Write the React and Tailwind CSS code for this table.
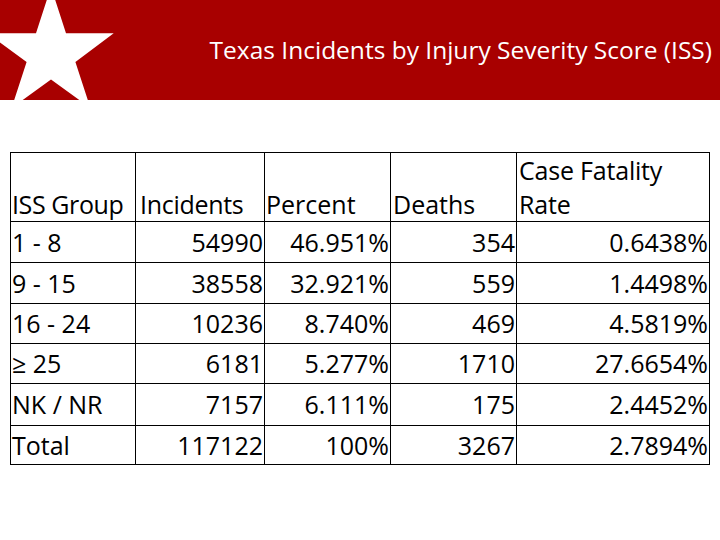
const rows = [
  ["1 - 8", "54990", "46.951%", "354", "0.6438%"],
  ["9 - 15", "38558", "32.921%", "559", "1.4498%"],
  ["16 - 24", "10236", "8.740%", "469", "4.5819%"],
  ["\u2265 25", "6181", "5.277%", "1710", "27.6654%"],
  ["NK / NR", "7157", "6.111%", "175", "2.4452%"],
  ["Total", "117122", "100%", "3267", "2.7894%"],
];

const heights = ["h-[41px]", "h-[41px]", "h-[40px]", "h-[40px]", "h-[42px]", "h-[39px]"];

function Star() {
  return (
    <svg
      className="absolute left-0 top-0"
      width="120"
      height="100"
      viewBox="0 0 120 100"
    >
      <polygon
        fill="#fff"
        points="51,-13 66,33.3 113.7,33.3 75.4,61.9 90.4,108 51,79.6 11.6,108 26.6,61.9 -12.7,33.3 36,33.3"
      />
    </svg>
  );
}

export default function App() {
  return (
    <div className="w-[720px] h-[540px] bg-white overflow-hidden font-['Open_Sans',sans-serif]">
      {/* Title bar */}
      <div className="relative h-[100px] bg-[#a80000] flex items-center justify-end pr-[8px]">
        <Star />
        <h1 className="text-white text-[24.5px] leading-none">
          Texas Incidents by Injury Severity Score (ISS)
        </h1>
      </div>

      {/* Table */}
      <table className="mt-[52px] ml-[10px] border-collapse text-black text-[25px] table-fixed">
        <colgroup>
          <col className="w-[125px]" />
          <col className="w-[129px]" />
          <col className="w-[126px]" />
          <col className="w-[126px]" />
          <col className="w-[193px]" />
        </colgroup>
        <thead>
          <tr className="h-[68px]">
            <th className="border border-black font-normal text-left align-bottom leading-[34px] pl-[1px] whitespace-nowrap tracking-[-0.4px]">ISS Group</th>
            <th className="border border-black font-normal text-left align-bottom leading-[34px] pl-[4px] tracking-[-0.3px]">Incidents</th>
            <th className="border border-black font-normal text-left align-bottom leading-[34px] pl-[1px]">Percent</th>
            <th className="border border-black font-normal text-left align-bottom leading-[34px] pl-[2px]">Deaths</th>
            <th className="border border-black font-normal text-left align-bottom leading-[34px] pl-[2px] tracking-[-0.2px]">
              Case Fatality
              <br />
              Rate
            </th>
          </tr>
        </thead>
        <tbody>
          {rows.map((r, i) => (
            <tr key={r[0]} className={heights[i]}>
              <td className="border border-black pl-[1px] leading-none whitespace-nowrap">{r[0]}</td>
              <td className="border border-black text-right pr-[1px] leading-none">{r[1]}</td>
              <td className="border border-black text-right pr-[1px] leading-none">{r[2]}</td>
              <td className="border border-black text-right pr-[1px] leading-none">{r[3]}</td>
              <td className="border border-black text-right pr-[1px] leading-none">{r[4]}</td>
            </tr>
          ))}
        </tbody>
      </table>
    </div>
  );
}
